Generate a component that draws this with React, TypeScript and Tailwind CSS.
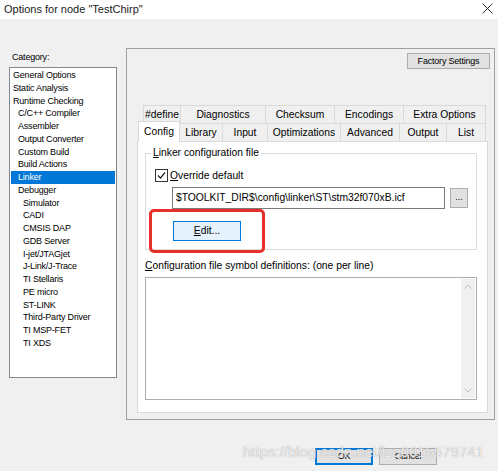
import React from 'react';

const categories: { label: string; level: number }[] = [
  { label: 'General Options', level: 0 },
  { label: 'Static Analysis', level: 0 },
  { label: 'Runtime Checking', level: 0 },
  { label: 'C/C++ Compiler', level: 1 },
  { label: 'Assembler', level: 1 },
  { label: 'Output Converter', level: 1 },
  { label: 'Custom Build', level: 1 },
  { label: 'Build Actions', level: 1 },
  { label: 'Linker', level: 1 },
  { label: 'Debugger', level: 1 },
  { label: 'Simulator', level: 2 },
  { label: 'CADI', level: 2 },
  { label: 'CMSIS DAP', level: 2 },
  { label: 'GDB Server', level: 2 },
  { label: 'I-jet/JTAGjet', level: 2 },
  { label: 'J-Link/J-Trace', level: 2 },
  { label: 'TI Stellaris', level: 2 },
  { label: 'PE micro', level: 2 },
  { label: 'ST-LINK', level: 2 },
  { label: 'Third-Party Driver', level: 2 },
  { label: 'TI MSP-FET', level: 2 },
  { label: 'TI XDS', level: 2 },
];

const topTabs = [
  { label: '#define', w: 'w-[37px]' },
  { label: 'Diagnostics', w: 'w-[85px]' },
  { label: 'Checksum', w: 'w-[69px]' },
  { label: 'Encodings', w: 'w-[69px]' },
  { label: 'Extra Options', w: 'w-[83px]' },
];

const bottomTabs = [
  { label: 'Library', w: 'w-[42px]' },
  { label: 'Input', w: 'w-[45px]' },
  { label: 'Optimizations', w: 'w-[73px]' },
  { label: 'Advanced', w: 'w-[59px]' },
  { label: 'Output', w: 'w-[47px]' },
  { label: 'List', w: 'w-[40px]' },
];

const indent = ['pl-[2px]', 'pl-[7px]', 'pl-[12px]'];

export default function App() {
  return (
    <div className="relative w-[498px] h-[471px] overflow-hidden bg-[#f0f0f0] flex flex-col font-['Liberation_Sans',Arial,sans-serif] text-black">
      {/* title bar */}
      <div className="h-[19px] bg-white flex items-center justify-between pl-[4px] pr-[5px]">
        <span className="text-[11px] leading-none text-[#1a1a1a]">Options for node "TestChirp"</span>
        <svg width="11" height="11" viewBox="0 0 11 11" className="mb-[3px]">
          <path d="M0.5 0.5 L10.5 10.5 M10.5 0.5 L0.5 10.5" stroke="#333" strokeWidth="1" />
        </svg>
      </div>

      <div className="flex pt-[29px]">
        {/* category list */}
        <div className="ml-[9px] w-[108px] flex flex-col">
          <div className="h-[19px] pl-[3px] pt-[3px] text-[9px] tracking-[-0.2px] leading-[13px]">Category:</div>
          <div className="h-[311px] bg-white border border-[#828790] pt-[1px] text-[9px] tracking-[-0.2px]">
            {categories.map((c) => (
              <div
                key={c.label}
                className={`h-[12.75px] leading-[12.75px] mx-[1px] ${indent[c.level]} ${
                  c.label === 'Linker' ? 'bg-[#0078d7] text-white' : ''
                }`}
              >
                {c.label}
              </div>
            ))}
          </div>
        </div>

        {/* options panel */}
        <div className="ml-[9px] w-[369px] h-[372px] border border-[#a0a0a0] flex flex-col text-[10.3px]">
          <div className="flex justify-end pt-[4px] pr-[4px]">
            <button className="w-[83px] h-[16px] bg-[#e1e1e1] border border-[#adadad] text-[9px] tracking-[-0.2px] leading-none">
              Factory Settings
            </button>
          </div>

          <div className="mt-[36px] ml-[10px] w-[351px] flex flex-col">
            <div className="flex ml-[6px] h-[18px]">
              {topTabs.map((t, i) => (
                <div
                  key={t.label}
                  className={`${t.w} h-full flex items-center justify-center border-t border-l border-[#d9d9d9] ${
                    i === topTabs.length - 1 ? 'border-r' : ''
                  }`}
                >
                  {t.label}
                </div>
              ))}
            </div>
            <div className="flex h-[18px]">
              <div className="relative z-10 ml-[1px] w-[42px] h-[21px] -mt-[2px] bg-white border-t border-l border-r border-[#d9d9d9] flex items-center justify-center pb-[1px]">
                Config
              </div>
              {bottomTabs.map((t, i) => (
                <div
                  key={t.label}
                  className={`${t.w} h-full flex items-center justify-center border-t border-[#d9d9d9] ${
                    i === 0 ? '' : 'border-l'
                  } ${i === bottomTabs.length - 1 ? 'border-r' : ''}`}
                >
                  {t.label}
                </div>
              ))}
            </div>

            {/* tab page */}
            <div className="relative h-[272px] bg-white border border-[#d9d9d9] flex flex-col">
              <div className="relative mt-[11px] ml-[7px] w-[332px] h-[97px] border border-[#dcdcdc] flex flex-col pl-[9px] pt-[15px]">
                <span className="absolute -top-[8px] left-[5px] bg-white px-[2px] leading-[14px]">
                  <span className="underline">L</span>inker configuration file
                </span>
                <div className="flex items-center h-[13px]">
                  <div className="w-[13px] h-[13px] border border-[#333] bg-white flex items-center justify-center">
                    <svg width="9" height="9" viewBox="0 0 9 9">
                      <path d="M1 4.5 L3.5 7 L8 1.5" fill="none" stroke="#222" strokeWidth="1.2" />
                    </svg>
                  </div>
                  <span className="ml-[2px]">
                    <span className="underline">O</span>verride default
                  </span>
                </div>
                <div className="flex items-center mt-[5px] ml-[17px]">
                  <div className="w-[273px] h-[22px] border border-[#7a7a7a] bg-white flex items-center pl-[3px]">
                    $TOOLKIT_DIR$\config\linker\ST\stm32f070xB.icf
                  </div>
                  <button className="ml-[5px] w-[18px] h-[20px] bg-[#e1e1e1] border border-[#adadad] text-[9px] leading-none pb-[2px]">
                    ...
                  </button>
                </div>
                <button className="mt-[12px] ml-[18px] w-[68px] h-[20px] bg-[#e5f1fb] border border-[#0078d7] leading-none">
                  <span className="underline">E</span>dit...
                </button>
              </div>

              <div className="mt-[9px] ml-[7px] leading-[13px]">
                <span className="underline">C</span>onfiguration file symbol definitions: (one per line)
              </div>
              <div className="mt-[5px] ml-[7px] w-[332px] h-[123px] border border-[#adadad] bg-white flex justify-end p-[1px]">
                <div className="w-[14px] h-full bg-[#f0f0f0] flex flex-col items-center justify-between py-[5px]">
                  <svg width="8" height="5" viewBox="0 0 8 5">
                    <path d="M0.5 4.5 L4 1 L7.5 4.5" fill="none" stroke="#c2c2c2" strokeWidth="1" />
                  </svg>
                  <svg width="8" height="5" viewBox="0 0 8 5">
                    <path d="M0.5 0.5 L4 4 L7.5 0.5" fill="none" stroke="#c2c2c2" strokeWidth="1" />
                  </svg>
                </div>
              </div>

              {/* red annotation box */}
              <div className="absolute left-[11px] top-[67px] w-[116px] h-[44px] border-[3px] border-[#e8302a] rounded-[5px]" />
            </div>
          </div>
        </div>
      </div>

      {/* dialog buttons */}
      <div className="flex ml-[315px] mt-[28px] gap-[6px] text-[9px] tracking-[-0.2px]">
        <button className="w-[58px] h-[17px] bg-[#e1e1e1] border-2 border-[#0078d7] leading-none">OK</button>
        <button className="w-[58px] h-[17px] bg-[#e1e1e1] border border-[#adadad] leading-none">Cancel</button>
      </div>

      {/* watermark */}
      <div className="absolute left-[243px] top-[444px] text-[15px] leading-none text-white/80 [text-shadow:0_0_1px_#8a8a8a]">
        https://blog.csdn.net/lzq6615579741
      </div>
    </div>
  );
}
